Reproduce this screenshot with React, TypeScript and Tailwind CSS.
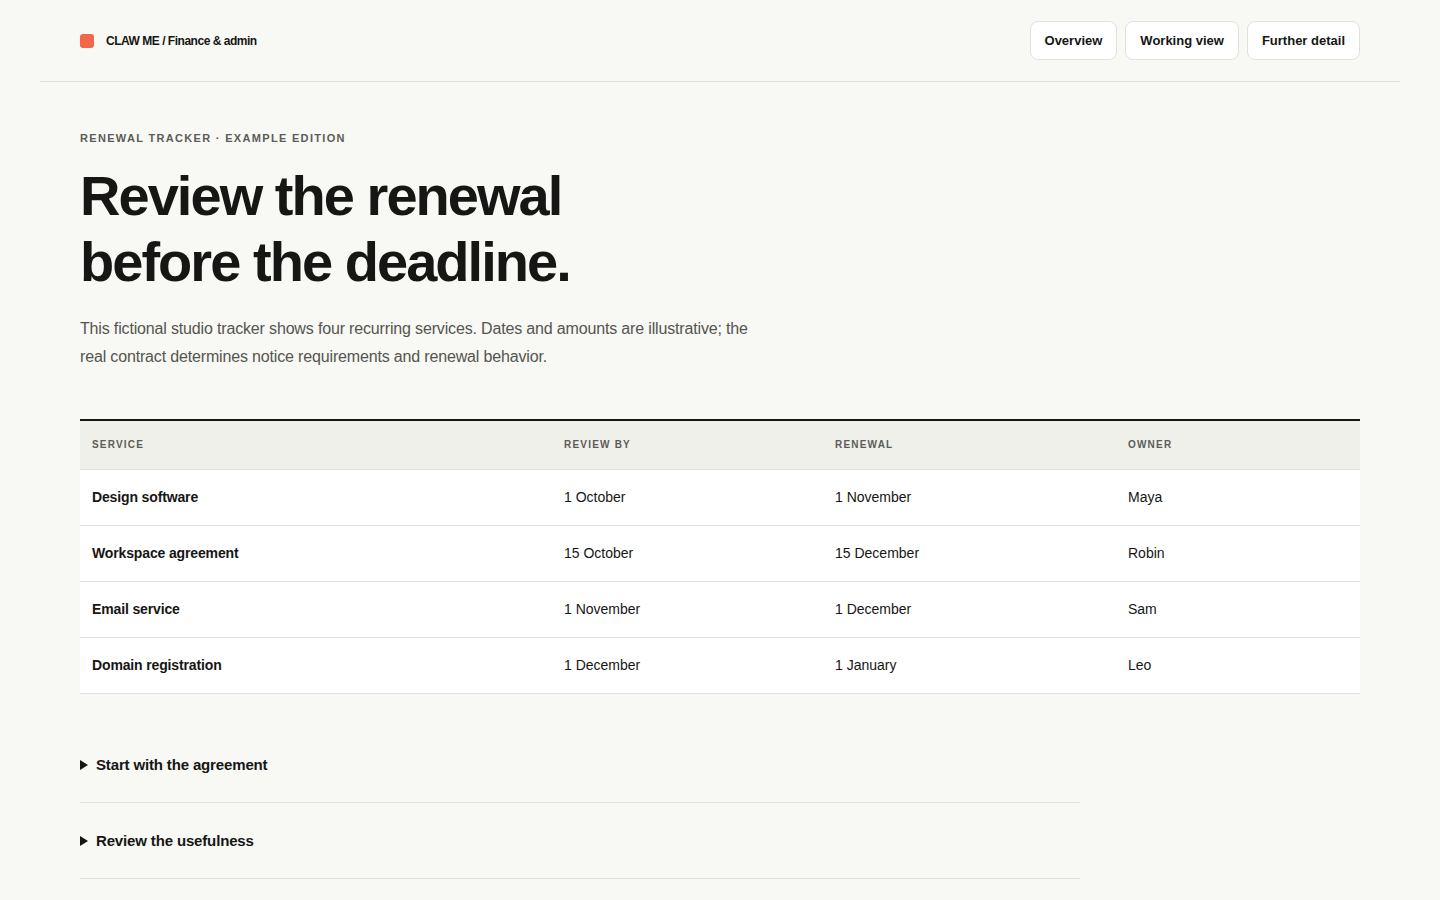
import React from "react";

const rows = [
  { service: "Design software", review: "1 October", renewal: "1 November", owner: "Maya" },
  { service: "Workspace agreement", review: "15 October", renewal: "15 December", owner: "Robin" },
  { service: "Email service", review: "1 November", renewal: "1 December", owner: "Sam" },
  { service: "Domain registration", review: "1 December", renewal: "1 January", owner: "Leo" },
];

const sections = ["Start with the agreement", "Review the usefulness"];

const NavButton: React.FC<{ label: string }> = ({ label }) => (
  <button className="h-[39px] rounded-lg border border-[#e2e2dc] bg-white px-[14px] text-[13px] font-bold text-[#161614]">
    {label}
  </button>
);

const App: React.FC = () => {
  return (
    <div className="min-h-screen bg-[#f8f8f4] text-[#161614]" style={{ fontFamily: '"Liberation Sans", Arial, sans-serif' }}>
      {/* Header */}
      <header className="mx-10 flex h-[82px] items-center justify-between border-b border-[#e2e2dc] px-10">
        <div className="flex items-center gap-3">
          <span className="h-[14px] w-[14px] rounded-[3px] bg-[#f4664a]" />
          <span className="text-[12px] font-bold tracking-[-0.04em]">CLAW ME / Finance &amp; admin</span>
        </div>
        <nav className="flex gap-2">
          <NavButton label="Overview" />
          <NavButton label="Working view" />
          <NavButton label="Further detail" />
        </nav>
      </header>

      <main className="px-20 pt-[48px]">
        <p className="text-[11px] font-bold uppercase tracking-[0.12em] text-[#5c5c57]">
          Renewal tracker · Example edition
        </p>
        <h1 className="mt-[16px] text-[56px] font-bold leading-[66px] tracking-[-0.035em]">
          Review the renewal
          <br />
          before the deadline.
        </h1>
        <p className="mt-[20px] max-w-[690px] text-[16px] leading-[28px] tracking-[-0.01em] text-[#55554f]">
          This fictional studio tracker shows four recurring services. Dates and amounts are illustrative; the real contract
          determines notice requirements and renewal behavior.
        </p>

        {/* Table */}
        <table className="mt-[48px] w-full border-collapse border-t-2 border-[#161614] text-left">
          <thead className="bg-[#f0f0eb]">
            <tr className="h-[50px] border-b border-[#e2e2dc] text-[10px] font-bold uppercase tracking-[0.12em] text-[#5c5c57]">
              <th className="w-[472px] px-3">Service</th>
              <th className="w-[271px] px-3">Review by</th>
              <th className="w-[293px] px-3">Renewal</th>
              <th className="px-3">Owner</th>
            </tr>
          </thead>
          <tbody className="bg-white text-[14px]">
            {rows.map((r) => (
              <tr key={r.service} className="h-[56px] border-b border-[#e2e2dc]">
                <td className="px-3 font-bold tracking-[-0.01em]">{r.service}</td>
                <td className="px-3">{r.review}</td>
                <td className="px-3">{r.renewal}</td>
                <td className="px-3">{r.owner}</td>
              </tr>
            ))}
          </tbody>
        </table>

        {/* Details */}
        <div className="mt-[33px] w-[1000px]">
          {sections.map((s) => (
            <details key={s} className="border-b border-[#e2e2dc]">
              <summary className="flex cursor-pointer list-none items-center gap-2 py-[26px] text-[15px] font-bold leading-[23px] tracking-[-0.01em]">
                <svg width="8" height="10" viewBox="0 0 8 10" className="shrink-0">
                  <path d="M0 0 L8 5 L0 10 Z" fill="#161614" />
                </svg>
                {s}
              </summary>
            </details>
          ))}
        </div>
      </main>
    </div>
  );
};

export default App;
